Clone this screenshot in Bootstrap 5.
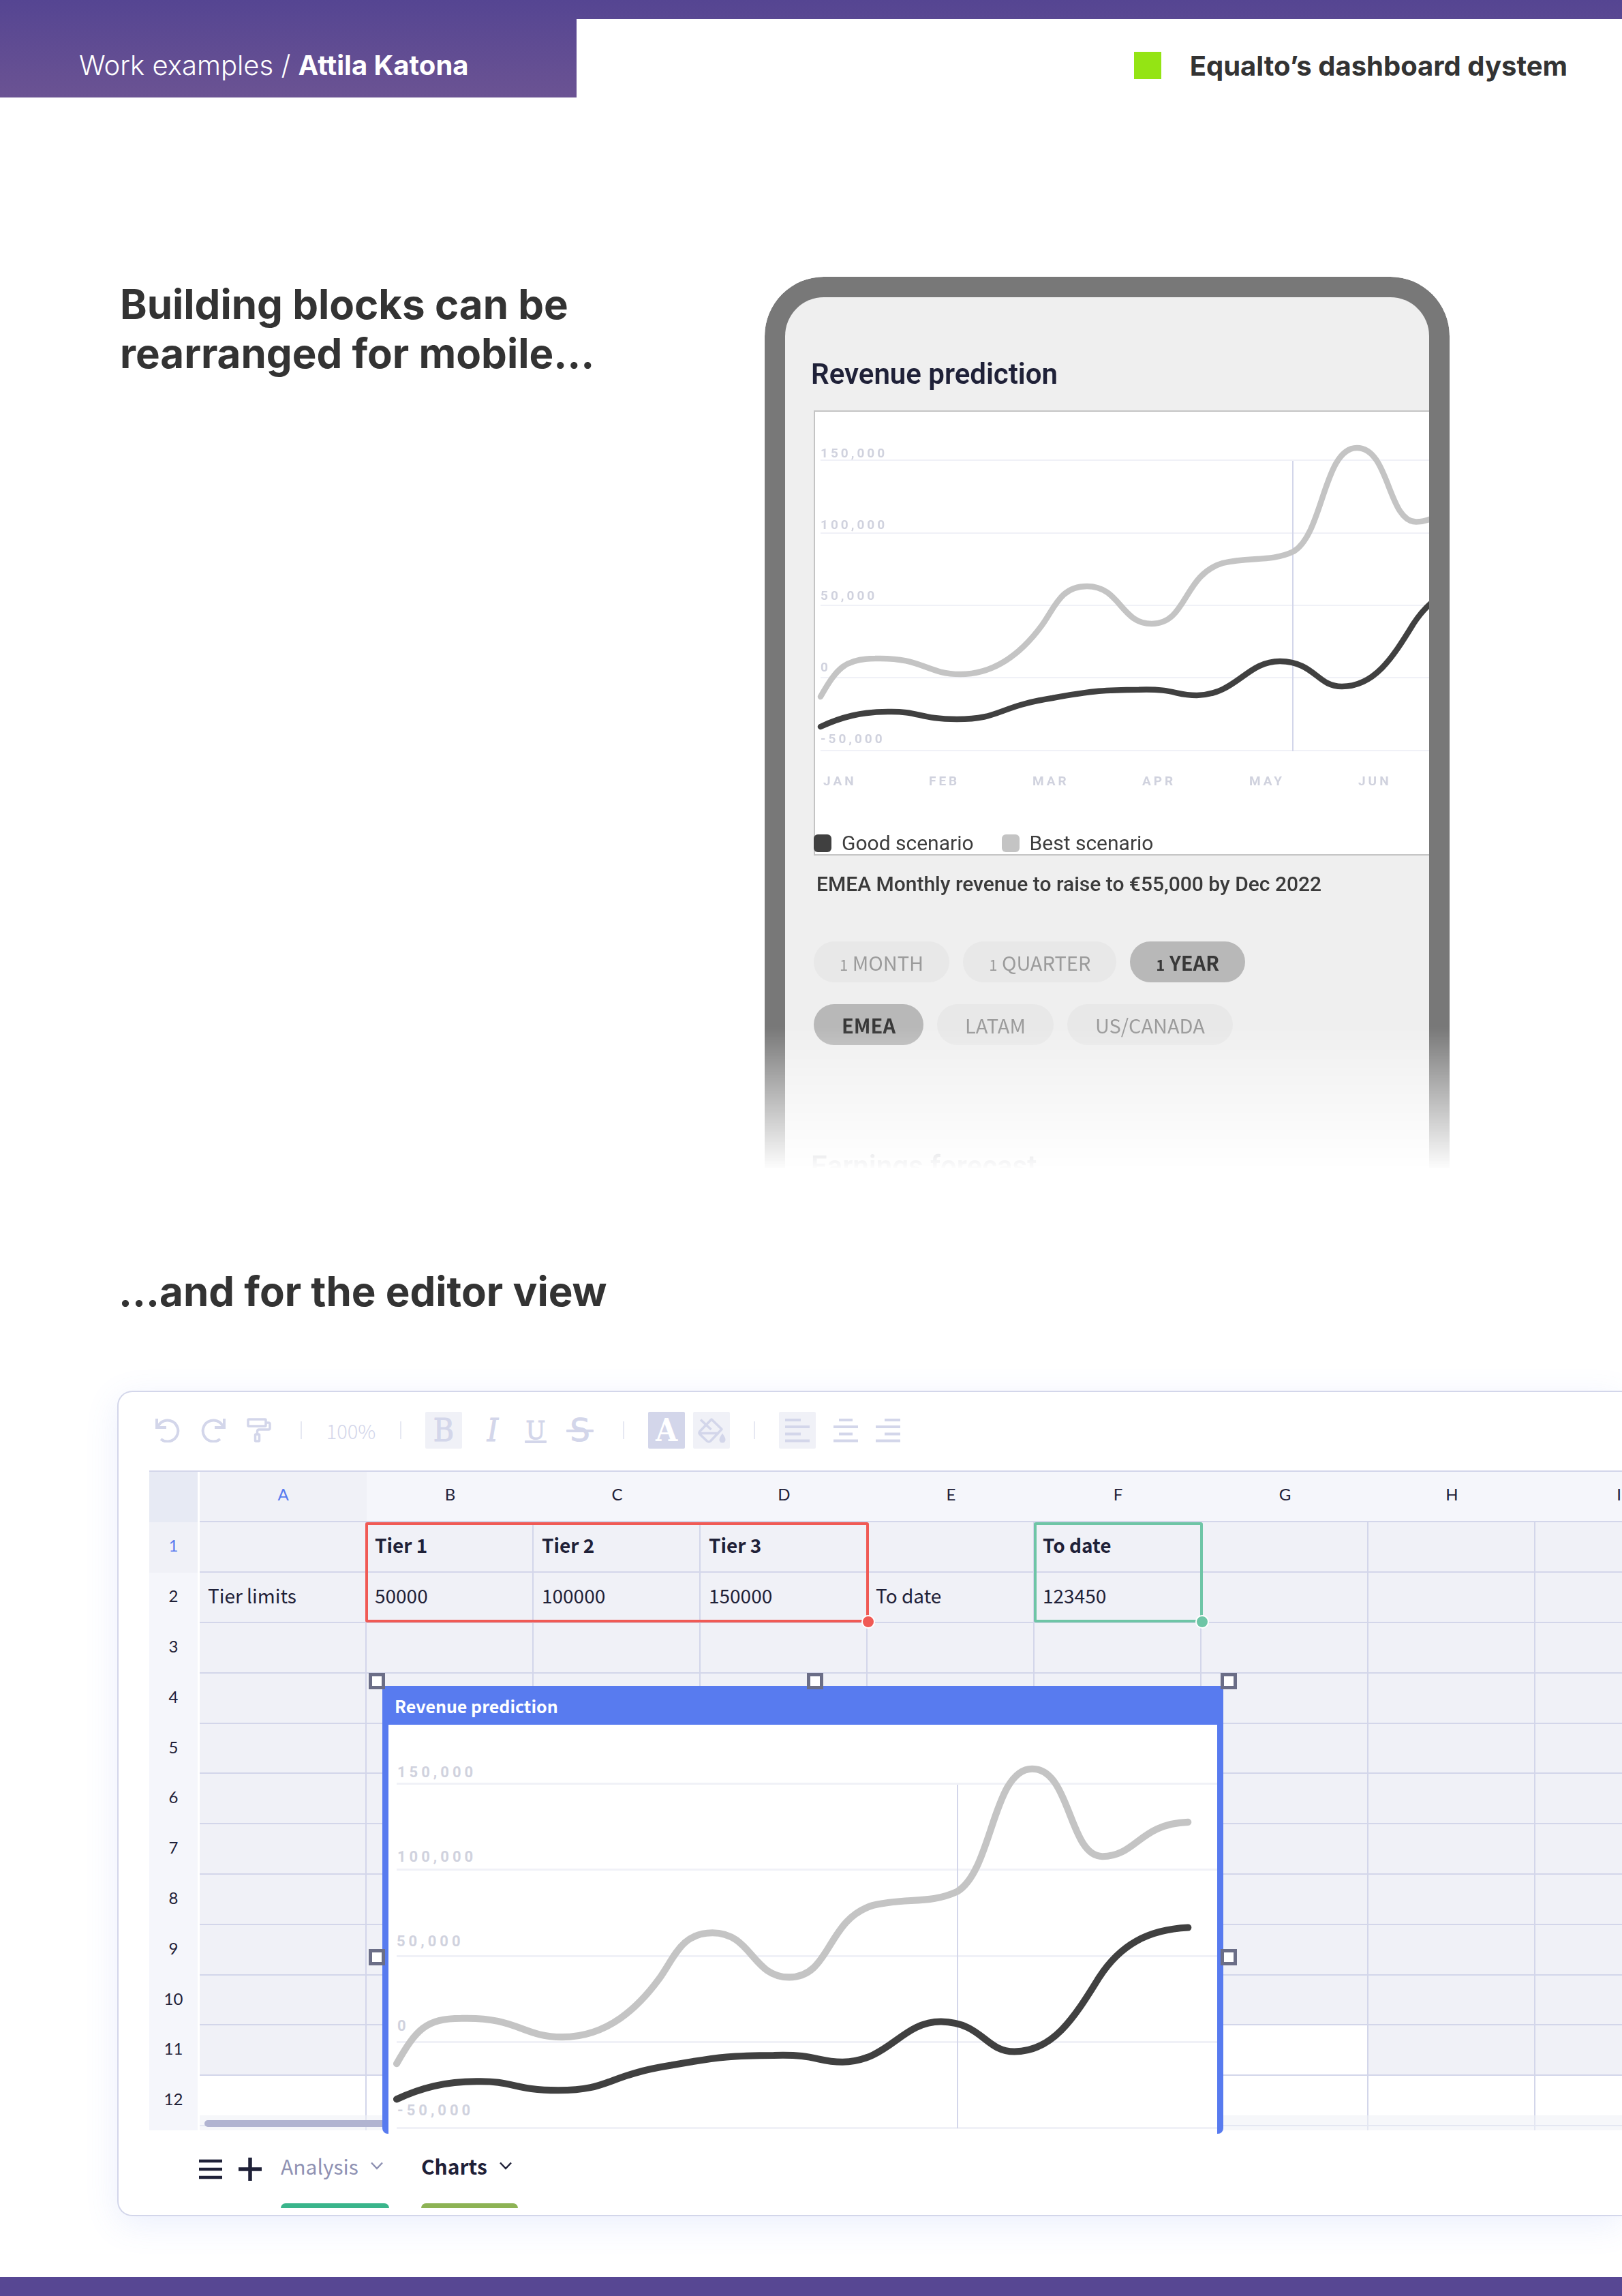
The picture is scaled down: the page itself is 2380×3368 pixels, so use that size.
<!DOCTYPE html>
<html lang="en">
<head>
<meta charset="utf-8">
<meta name="viewport" content="width=device-width, initial-scale=1">
<title>Work examples / Attila Katona</title>
<link href="https://cdn.jsdelivr.net/npm/bootstrap@5.3.0/dist/css/bootstrap.min.css" rel="stylesheet">
<style>
:root{--ink:#333;--navy:#1f2138;--line:#d3d6ea;--cell:#f0f1f7;--soft:#f5f6fb;--blue:#587bef;--src:"Source Sans Pro","Noto Sans CJK SC",sans-serif}
body{font-family:Inter,sans-serif;color:var(--ink);background:#fff;overflow-x:hidden}
button{background:none;border:0;padding:0;color:inherit}
.masthead{height:143px;background:linear-gradient(#554592,#6b5393)}
.masthead-left{width:846px;padding:64px 0 0 116px;font-size:40px;line-height:64px;color:#fff;font-weight:300}
.masthead-left strong{font-weight:700}
.masthead-right{margin-top:28px;padding:24px 80px 0 0;font-size:40px;font-weight:700;gap:42px}
.masthead-right span{line-height:48px;padding-top:5px}
.green-tile{width:40px;height:40px;background:#94e414}
.headline{font-size:60px;line-height:72px;font-weight:700;margin:0}
.mobile-part{padding:263px 253px 0 176px}
.mobile-part .headline{padding-top:4px}
.phone{width:1005px;height:1307px;border:30px solid #787878;border-bottom:0;border-radius:87px 87px 0 0;background:#efefef;overflow:hidden;padding:88px 0 0 38px;-webkit-mask-image:linear-gradient(#000 1101px,transparent 1311px);mask-image:linear-gradient(#000 1101px,transparent 1311px)}
.phone-title{font:600 42px/50px Roboto,sans-serif;color:var(--navy);margin:0}
.chart-panel{margin:28px 0 0 4px;border:2px solid #c4c4c4;border-right:0;background:#fff}
.chart-panel svg,.win-body svg{display:block}
.legend-row{font:400 30px/32px Roboto,sans-serif;gap:41px;margin-left:-2px;color:#3d3d3d}
.legend-row span{gap:15px}
.legend-row i{width:26px;height:26px;border-radius:6px;background:#404040}
.legend-row .pale{background:#c4c4c4}
.phone-note{font:500 30px/36px Roboto,sans-serif;color:#3a3a3a;margin:24px 0 66px 8px}
.pill-row{gap:20px;margin:0 0 32px 4px}
.pill{height:60px;border-radius:30px;background:#e8e8e8;color:#9b9b9b;font:400 29px/60px var(--src);text-align:center;padding:0 38px}
.pill-row.areas .pill{padding:0 41px}
.pill small{font-size:22px}
.pill.on{background:#b8b8b8;color:#383838;font-weight:700}
.next-title{margin-top:153px;opacity:.7}
.axis{font:700 19px Roboto,sans-serif;letter-spacing:4px;fill:#d0d2de}
.axis-lg{font-size:22px;letter-spacing:5px}
.editor-part{padding:145px 0 89px 172px}
.editor-part .headline{padding-left:2px}
.editor{margin-top:110px;border:2px solid var(--line);border-right:0;border-radius:22px 0 0 22px;background:#fff;box-shadow:0 12px 50px rgba(88,123,239,.12);padding:29px 0 0 45px;font-family:var(--src);color:var(--navy)}
.tools{height:54px;color:var(--line);padding-left:9px}
.tool-set{gap:31px}
.type-set{gap:27px}
.fill-set{gap:12px}
.align-set{gap:26px}
.tool{flex:none;width:36px;height:54px;position:relative;font-family:"DejaVu Serif Condensed","DejaVu Serif",serif;font-size:46px;line-height:54px;text-align:center;-webkit-text-stroke:1px currentColor}
.tool.boxed{width:54px;border-radius:2px;background:var(--cell)}
.tool.solid{background:var(--line);color:#fff;font-weight:700;-webkit-text-stroke:0}
.tool svg,.tab-icon svg{display:block;margin:auto}
.tool.under{font-size:38px;line-height:50px}
.tool.under::after,.tool.strike::after{content:"";position:absolute;left:2px;right:2px;bottom:8px;height:4px;border-radius:1px;background:currentColor}
.tool.strike{width:40px;font-family:"DejaVu Sans",sans-serif;font-size:46px}
.tool.strike::after{left:0;right:0;bottom:24px}
.sep{width:2px;height:26px;background:#e6e8f2;margin:0 35px}
.sep.wide{margin-left:43px}
.zoom{font-size:29px;line-height:54px;font-weight:300;width:74px}
.sheet-area{margin-top:32px;position:relative}
.sheet-clip{height:968px;overflow:hidden;position:relative}
.sheet{table-layout:fixed;width:2279px;border-collapse:separate;border-spacing:0;font-size:28px;line-height:36px;border-top:2px solid var(--line)}
.sheet col.num{width:74px}
.sheet col.dat{width:245px}
.sheet th,.sheet td{padding:0 0 6px}
.sheet th{font:400 24px/36px Lato,sans-serif;text-align:center;background:var(--soft)}
.sheet thead th{height:74px;border-bottom:2px solid var(--line)}
.sheet tbody tr{height:74px}
.sheet tbody tr:nth-child(5n){height:73px}
.sheet th.cur{background:var(--cell);color:var(--blue)}
.sheet thead th:first-child{background:#e7eaf4;border-bottom:0}
.sheet tr th:first-child{border-right:3px solid #fff}
.sheet td{background:var(--cell);border-right:2px solid var(--line);border-bottom:2px solid var(--line);padding-left:12px}
.sheet td.blank,.sheet tr.blank td{background:#fff}
.sheet td.strong{font-weight:700}
.track{position:absolute;left:74px;right:0;bottom:0;height:22px;background:rgba(240,241,247,.6)}
.track i{position:absolute;left:7px;top:7px;width:600px;height:10px;border-radius:5px;background:#b1b4d1}
.range{position:absolute;top:76px;height:147px;border:4px solid #f05a55;border-radius:3px}
.range::after{content:"";position:absolute;right:-13px;bottom:-13px;width:20px;height:20px;border-radius:50%;border:2px solid #fff;background:#f05a55}
.range-a{left:317px;width:739px}
.range-b{left:1298px;width:248px;border-color:#6ec5a6}
.range-b::after{background:#6ec5a6}
.win{position:absolute;left:342px;top:316px;width:1234px;background:var(--blue);border-radius:0 0 8px 8px;padding:0 9px;height:657px}
.win h3{font-size:25px;line-height:55px;font-weight:700;color:#fff;margin:0;padding:2px 0 0 9px}
.win-body{background:#fff;height:600px;overflow:hidden}
.grip{position:absolute;width:24px;height:24px;border:5px solid #6b6e87;background:#fff}
.grip-n{top:-19px}
.grip-m{top:386px}
.grip-l{left:-20px}
.grip-c{left:calc(50% + 6px)}
.grip-r{right:-20px}
.tabs-bar{padding:34px 0 10px 73px}
.tab-icon{height:46px}
.sheet-tab{font-size:30px;line-height:36px;display:flex;flex-direction:column;justify-content:space-between;text-align:left;height:80px;margin-left:28px;color:#8f92b3}
.sheet-tab::after{content:"";display:block;height:7px;border-radius:7px 7px 0 0;background:#3ab58b}
.sheet-tab.on{color:var(--navy);font-weight:700;margin-left:47px}
.sheet-tab.on::after{background:#8db355}
.sheet-tab span{display:flex;align-items:center;gap:18px;padding-right:9px}
.foot-bar{height:28px;background:#574793}
</style>
</head>
<body>
<svg width="0" height="0" class="position-absolute" aria-hidden="true">
  <defs>
    <g id="curves" fill="none" stroke-width="8.5" stroke-linecap="round">
      <path stroke="#c4c4c4" d="M0 347C24 305 36 291 80 291C150 289 155 314 205 314C262 314 300 276 325 242C344 216 352 185 391 185C440 185 440 240 486 240C538 240 532 168 590 151C630 141 660 150 694 134C738 108 738 -18 787 -18C835 -18 832 90.500 874 90.500C916 90 920 50 980 48"/>
      <path stroke="#404040" d="M0 391C30 377 60 369 99 369C145 368 145 380 200 380C265 380 258 362 340 349C400 338 420 337 467 336.700C520 335 520 345 552 345C610 344 625 295 674 295C726 296 728 332 765 332C812 332 838 292 870 240C896 200 930 181 980 178.500"/>
    </g>
  </defs>
</svg>

<header class="masthead d-flex">
  <div class="masthead-left flex-shrink-0">Work examples / <strong>Attila Katona</strong></div>
  <div class="masthead-right bg-white flex-grow-1 d-flex justify-content-end align-items-start">
    <i class="green-tile mt-4"></i><span class="mt-3">Equalto’s dashboard dystem</span>
  </div>
</header>

<main>
<section class="mobile-part d-flex justify-content-between align-items-start">
  <h1 class="headline">Building blocks can be<br>rearranged for mobile...</h1>
  <div class="phone flex-shrink-0">
    <h2 class="phone-title">Revenue prediction</h2>
    <div class="chart-panel">
      <svg width="901" height="617" viewBox="0 0 901 617" role="img" aria-label="Revenue prediction chart">
        <path stroke="#f0f1f7" stroke-width="2" d="M8 71H901M8 178H901M8 284H901M8 390H901M8 497H901"/>
        <path stroke="#d3d6ea" stroke-width="2" d="M701 72V498"/>
        <g class="axis">
          <text x="8" y="67">150,000</text><text x="8" y="172">100,000</text><text x="8" y="276">50,000</text><text x="8" y="381">0</text><text x="8" y="486">-50,000</text>
          <text x="12" y="548">JAN</text><text x="167" y="548">FEB</text><text x="319" y="548">MAR</text><text x="480" y="548">APR</text><text x="637" y="548">MAY</text><text x="797" y="548">JUN</text>
        </g>
        <use href="#curves" x="8" y="71"/>
      </svg>
      <div class="legend-row d-flex">
        <span class="d-flex align-items-center"><i></i>Good scenario</span>
        <span class="d-flex align-items-center"><i class="pale"></i>Best scenario</span>
      </div>
    </div>
    <p class="phone-note">EMEA Monthly revenue to raise to €55,000 by Dec 2022</p>
    <div class="pill-row d-flex">
      <button class="pill"><small>1</small> MONTH</button>
      <button class="pill"><small>1</small> QUARTER</button>
      <button class="pill on"><small>1</small> YEAR</button>
    </div>
    <div class="pill-row areas d-flex">
      <button class="pill on">EMEA</button>
      <button class="pill">LATAM</button>
      <button class="pill">US/CANADA</button>
    </div>
    <h2 class="phone-title next-title">Earnings forecast</h2>
  </div>
</section>

<section class="editor-part">
  <h2 class="headline">...and for the editor view</h2>
  <div class="editor">
    <div class="tools d-flex align-items-center">
      <div class="tool-set d-flex">
        <button class="tool" aria-label="Undo"><svg width="36" height="36" viewBox="0 0 36 36" fill="none" stroke="currentColor" stroke-width="4"><path d="M2 1V14H16"/><path d="M3.500 13A15.500 15.500 0 1 1 8 31"/></svg></button>
        <button class="tool" aria-label="Redo"><svg width="36" height="36" viewBox="0 0 36 36" fill="none" stroke="currentColor" stroke-width="4"><path d="M34 1V14H20"/><path d="M32.500 13A15.500 15.500 0 1 0 28 31"/></svg></button>
        <button class="tool" aria-label="Copy format"><svg width="36" height="36" viewBox="0 0 36 36" fill="none" stroke="currentColor" stroke-width="3.500" stroke-linejoin="round"><rect x="2" y="2" width="26" height="10" rx="1"/><path d="M28 7H32Q34 7 34 9V15Q34 17 32 17H18Q15.500 17 15.500 20V23"/><rect x="12.500" y="24" width="6" height="10" rx="1"/></svg></button>
      </div>
      <i class="sep wide"></i>
      <button class="zoom">100%</button>
      <i class="sep"></i>
      <div class="type-set d-flex">
        <button class="tool boxed" aria-label="Bold">B</button>
        <button class="tool fst-italic" aria-label="Italic">I</button>
        <button class="tool under" aria-label="Underline">U</button>
        <button class="tool strike" aria-label="Strikethrough">S</button>
      </div>
      <i class="sep wide"></i>
      <div class="fill-set d-flex">
        <button class="tool boxed solid" aria-label="Text colour">A</button>
        <button class="tool boxed" aria-label="Fill colour"><svg width="54" height="54" viewBox="0 0 54 54" fill="none" stroke="currentColor" stroke-width="3.500" stroke-linejoin="round"><path d="M27 11L42 25.500L25.500 43Q23 45 20.500 43L10 33Q8 31 10 28.500ZM9 31.500H38M11 11.500L26.500 26"/><path fill="currentColor" stroke="none" d="M43 31.500C46 36 47.500 38.500 47.500 41A4.500 4.500 0 0 1 38.500 41C38.500 38.500 40 36 43 31.500Z"/></svg></button>
      </div>
      <i class="sep"></i>
      <div class="align-set d-flex">
        <button class="tool boxed" aria-label="Align left"><svg width="36" height="36" viewBox="0 0 36 36" stroke="currentColor" stroke-width="4"><path d="M0 3H23M0 13H36M0 23.500H23M0 33.500H36"/></svg></button>
        <button class="tool" aria-label="Align centre"><svg width="36" height="36" viewBox="0 0 36 36" stroke="currentColor" stroke-width="4"><path d="M8 3H28M0 13H36M8 23.500H28M0 33.500H36"/></svg></button>
        <button class="tool" aria-label="Align right"><svg width="36" height="36" viewBox="0 0 36 36" stroke="currentColor" stroke-width="4"><path d="M13 3H36M0 13H36M13 23.500H36M0 33.500H36"/></svg></button>
      </div>
    </div>

    <div class="sheet-area">
      <div class="sheet-clip">
        <table class="sheet">
          <colgroup><col class="num"><col class="dat" span="9"></colgroup>
          <thead>
            <tr><th></th><th class="cur">A</th><th>B</th><th>C</th><th>D</th><th>E</th><th>F</th><th>G</th><th>H</th><th>I</th></tr>
          </thead>
          <tbody>
            <tr><th class="cur">1</th><td></td><td class="strong">Tier 1</td><td class="strong">Tier 2</td><td class="strong">Tier 3</td><td></td><td class="strong">To date</td><td></td><td></td><td></td></tr>
            <tr><th>2</th><td>Tier limits</td><td>50000</td><td>100000</td><td>150000</td><td>To date</td><td>123450</td><td></td><td></td><td></td></tr>
            <tr><th>3</th><td></td><td></td><td></td><td></td><td></td><td></td><td></td><td></td><td></td></tr>
            <tr><th>4</th><td></td><td></td><td></td><td></td><td></td><td></td><td></td><td></td><td></td></tr>
            <tr><th>5</th><td></td><td></td><td></td><td></td><td></td><td></td><td></td><td></td><td></td></tr>
            <tr><th>6</th><td></td><td></td><td></td><td></td><td></td><td></td><td></td><td></td><td></td></tr>
            <tr><th>7</th><td></td><td></td><td></td><td></td><td></td><td></td><td></td><td></td><td></td></tr>
            <tr><th>8</th><td></td><td></td><td></td><td></td><td></td><td></td><td></td><td></td><td></td></tr>
            <tr><th>9</th><td></td><td></td><td></td><td></td><td></td><td></td><td></td><td></td><td></td></tr>
            <tr><th>10</th><td></td><td></td><td></td><td></td><td></td><td></td><td></td><td></td><td></td></tr>
            <tr><th>11</th><td></td><td></td><td></td><td></td><td></td><td></td><td class="blank"></td><td></td><td></td></tr>
            <tr class="blank"><th>12</th><td></td><td></td><td></td><td></td><td></td><td></td><td></td><td></td><td></td></tr>
            <tr class="blank"><th></th><td></td><td></td><td></td><td></td><td></td><td></td><td></td><td></td><td></td></tr>
          </tbody>
        </table>
        <div class="track"><i></i></div>
        <div class="range range-a"></div>
        <div class="range range-b"></div>
      </div>

      <div class="win">
        <h3>Revenue prediction</h3>
        <div class="win-body">
          <svg width="1216" height="600" viewBox="0 0 1216 600" role="img" aria-label="Revenue prediction chart">
            <path stroke="#f0f1f7" stroke-width="3" d="M12 86.500H1216M12 212.500H1216M12 339.500H1216M12 465.500H1216M12 591.500H1216"/>
            <path stroke="#d3d6ea" stroke-width="2" d="M835 88V592"/>
            <g class="axis axis-lg">
              <text x="13" y="77">150,000</text><text x="13" y="201">100,000</text><text x="12" y="325">50,000</text><text x="13" y="449">0</text><text x="13" y="573">-50,000</text>
            </g>
            <use href="#curves" transform="translate(12 86) scale(1.185)"/>
          </svg>
        </div>
        <i class="grip grip-n grip-l"></i><i class="grip grip-n grip-c"></i><i class="grip grip-n grip-r"></i>
        <i class="grip grip-m grip-l"></i><i class="grip grip-m grip-r"></i>
      </div>
    </div>

    <div class="tabs-bar d-flex">
      <button class="tab-icon" aria-label="All sheets"><svg width="34" height="34" viewBox="0 0 34 34" stroke="currentColor" stroke-width="4.500"><path d="M0 5H34M0 17H34M0 29H34"/></svg></button>
      <button class="tab-icon ms-4" aria-label="Add sheet"><svg width="34" height="34" viewBox="0 0 34 34" stroke="currentColor" stroke-width="5.500"><path d="M0 17H34M17 0V34"/></svg></button>
      <button class="sheet-tab"><span>Analysis<svg width="18" height="12" viewBox="0 0 18 12" fill="none" stroke="currentColor" stroke-width="2.500"><path d="M1 1.500L9 10L17 1.500"/></svg></span></button>
      <button class="sheet-tab on"><span>Charts<svg width="18" height="12" viewBox="0 0 18 12" fill="none" stroke="currentColor" stroke-width="2.500"><path d="M1 1.500L9 10L17 1.500"/></svg></span></button>
    </div>
  </div>
</section>
</main>
<footer class="foot-bar"></footer>
<script src="https://cdn.jsdelivr.net/npm/bootstrap@5.3.0/dist/js/bootstrap.bundle.min.js"></script>
</body>
</html>
